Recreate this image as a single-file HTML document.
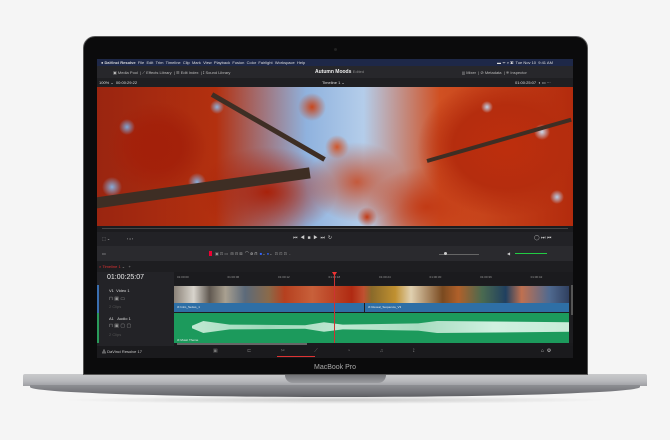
<!DOCTYPE html>
<html><head><meta charset="utf-8"><style>
*{margin:0;padding:0;box-sizing:border-box}
body{width:670px;height:440px;background:#f5f5f5;position:relative;overflow:hidden;font-family:"Liberation Sans",sans-serif}
.a{position:absolute}
.t{position:absolute;font-size:4px;color:#bbb;white-space:nowrap}
</style></head><body>
<div class="a" style="left:60px;top:396px;width:550px;height:8px;border-radius:50%;background:radial-gradient(ellipse at center,rgba(0,0,0,.18),rgba(0,0,0,0) 70%)"></div>
<div class="a" style="left:23px;top:374px;width:624px;height:12px;background:linear-gradient(#c9cacc,#b7b8bb 60%,#9fa0a4);border-radius:2px 2px 0 0"></div>
<div class="a" style="left:30px;top:385px;width:610px;height:12px;background:linear-gradient(#8e8f93,#6f7075 70%,#5c5d61);border-radius:0 0 60% 60%/0 0 100% 100%"></div>
<div class="a" style="left:285px;top:374px;width:101px;height:9px;background:linear-gradient(#6e6f73,#9a9b9f);border-radius:0 0 8px 8px"></div>
<div class="a" style="left:83px;top:36px;width:505px;height:339px;background:#0b0b0c;border-radius:12px 12px 0 0;border:1px solid #555"></div>
<div class="a" style="left:334px;top:48px;width:3px;height:3px;border-radius:50%;background:#222"></div>
<div class="t" style="left:310px;top:364px;font-size:7px;color:#aaa;width:50px;text-align:center">MacBook Pro</div>
<div class="a" style="left:97px;top:59px;width:476px;height:299px;background:#1d1d20;overflow:hidden">
 <div class="a" style="left:0;top:0;width:476px;height:7px;background:#1e2848"></div>
 <div class="t" style="left:4px;top:1px;color:#ddd">&#9679; <b>DaVinci Resolve</b> &nbsp;File &nbsp;Edit &nbsp;Trim &nbsp;Timeline &nbsp;Clip &nbsp;Mark &nbsp;View &nbsp;Playback &nbsp;Fusion &nbsp;Color &nbsp;Fairlight &nbsp;Workspace &nbsp;Help</div>
 <div class="t" style="left:400px;top:1px;color:#ddd">▬ ᯤ ⌕ ▣ &nbsp;Tue Nov 10 &nbsp;9:41 AM</div>
 <div class="a" style="left:0;top:7px;width:476px;height:12px;background:#27272b"></div>
 <div class="t" style="left:16px;top:11px">▣ Media Pool &nbsp;| ⟋ Effects Library &nbsp;| ☰ Edit Index &nbsp;| ⟟ Sound Library</div>
 <div class="t" style="left:218px;top:10px;font-size:5px;color:#eee"><b>Autumn Moods</b> <span style="color:#888;font-size:4px">Edited</span></div>
 <div class="t" style="left:365px;top:11px">||| Mixer &nbsp;| ⊘ Metadata &nbsp;| ⁜ Inspector</div>
 <div class="a" style="left:0;top:19px;width:476px;height:9px;background:#1f1f22"></div>
 <div class="t" style="left:2px;top:21px;color:#ddd">100% ⌄ &nbsp;00:00:29:22</div>
 <div class="t" style="left:225px;top:21px;color:#ddd">Timeline 1 ⌄</div>
 <div class="t" style="left:418px;top:21px;color:#ddd">01:00:25:07 &nbsp;◐ ▭ ···</div>
 <!-- image -->
 <div class="a" style="left:0;top:28px;width:476px;height:139px;background:
  radial-gradient(circle 8px at 30px 40px,#7fa6d6 0,rgba(127,166,214,0) 100%),
  radial-gradient(circle 10px at 15px 100px,#86acd9 0,rgba(127,166,214,0) 100%),
  radial-gradient(circle 7px at 120px 20px,#8fb3dc 0,rgba(127,166,214,0) 100%),
  radial-gradient(circle 9px at 100px 95px,#86acd9 0,rgba(127,166,214,0) 100%),
  radial-gradient(circle 8px at 445px 45px,#c9d8ea 0,rgba(200,215,235,0) 100%),
  radial-gradient(circle 7px at 460px 110px,#b8cde6 0,rgba(200,215,235,0) 100%),
  radial-gradient(circle 6px at 390px 20px,#c0d2e8 0,rgba(200,215,235,0) 100%),
  radial-gradient(circle 12px at 240px 60px,#d0562a 0,rgba(208,86,42,0) 100%),
  radial-gradient(circle 10px at 270px 130px,#c23a15 0,rgba(194,58,21,0) 100%),
  radial-gradient(circle 14px at 215px 20px,#c8461c 0,rgba(200,70,28,0) 100%),
  radial-gradient(ellipse 50px 40px at 260px 95px,rgba(200,70,30,.85) 0,rgba(200,70,30,0) 100%),
  radial-gradient(ellipse 50px 45px at 60px 60px,#a3200a 0,rgba(163,32,10,.9) 50%,rgba(160,40,15,0) 100%),
  radial-gradient(ellipse 90px 70px at 410px 60px,#bd2e0d 0,#b52d0e 60%,rgba(180,45,15,0) 100%),
  radial-gradient(ellipse 70px 45px at 170px 105px,#a8220b 0,rgba(168,34,11,0) 100%),
  radial-gradient(ellipse 60px 40px at 330px 120px,#c23a15 0,rgba(194,58,21,0) 100%),
  linear-gradient(90deg,#9a2510,#b3300f 25%,#8fb2de 44%,#b4cdea 56%,#d05022 72%,#b32b0d)"></div>
 <div class="a" style="left:-5px;top:139px;width:220px;height:11px;background:#3e2e24;transform:rotate(-8deg);transform-origin:left"></div>
 <div class="a" style="left:115px;top:33px;width:130px;height:5px;background:#3e2e24;transform:rotate(30deg);transform-origin:left"></div>
 <div class="a" style="left:330px;top:100px;width:150px;height:4px;background:#3e2e24;transform:rotate(-16deg);transform-origin:left"></div>
 <div class="a" style="left:0;top:167px;width:476px;height:6px;background:#1c1c1f"></div>
 <div class="a" style="left:5px;top:169px;width:466px;height:1px;background:#444"></div>
 <div class="a" style="left:0;top:173px;width:476px;height:14px;background:#222226"></div>
 <div class="t" style="left:5px;top:177px">⬚ ⌄ &nbsp;&nbsp;&nbsp;&nbsp;&nbsp;&nbsp;&nbsp;&nbsp;&nbsp;&nbsp;&nbsp;&nbsp;&nbsp;&nbsp;‹ • ›</div>
 <div class="t" style="left:196px;top:176px;font-size:5px;color:#ccc">⏮ &nbsp;◀ &nbsp;■ &nbsp;▶ &nbsp;⏭ &nbsp;↻</div>
 <div class="t" style="left:437px;top:176px;font-size:5px;color:#ccc">◯ ⏭ ⏮</div>
 <div class="a" style="left:0;top:187px;width:476px;height:15px;background:#2a2a2e"></div>
 <div class="t" style="left:5px;top:192px">▭</div>
 <div class="a" style="left:112px;top:192px;width:3px;height:5px;background:#e03"></div>
 <div class="t" style="left:118px;top:192px;color:#999">▣ ⊡ ▭ &nbsp;⊞ ⊟ ⊠ &nbsp;<span style="color:#ddd">⌒ ⊘ ⊓</span> &nbsp;<span style="color:#36f">■</span>⌄ <span style="color:#36f">●</span>⌄ &nbsp;⊡ ⊡ ⊡ &nbsp;-</div>
 <div class="a" style="left:342px;top:195px;width:40px;height:1px;background:#666"></div>
 <div class="a" style="left:347px;top:193px;width:3px;height:3px;border-radius:50%;background:#ccc"></div>
 <div class="a" style="left:418px;top:194px;width:32px;height:1px;background:#2c4"></div>
 <div class="t" style="left:410px;top:192px;color:#ccc">◀︎</div>
 <div class="a" style="left:0;top:202px;width:476px;height:11px;background:#1e1e21"></div>
 <div class="t" style="left:2px;top:205px;color:#d33">× Timeline 1 <span style="color:#999">⌄ &nbsp;&nbsp;+</span></div>
 <div class="a" style="left:0;top:213px;width:77px;height:86px;background:#232327"></div>
 <div class="t" style="left:10px;top:215px;font-size:7px;color:#eee">01:00:25:07</div>
 <div class="a" style="left:77px;top:213px;width:399px;height:13px;background:#1b1b1e"></div>
 <div class="t" style="left:80px;top:216px;font-size:3px;color:#999;word-spacing:38px">01:00:00 01:00:06 01:00:12 01:00:18 01:00:24 01:00:30 01:00:36 01:00:42</div>
 <div class="a" style="left:0;top:226px;width:2px;height:28px;background:#3a6fb0"></div>
 <div class="t" style="left:12px;top:229px;color:#ddd">V1 &nbsp;Video 1</div>
 <div class="t" style="left:12px;top:237px;font-size:5px;color:#999">⊓ ▣ ▭</div>
 <div class="t" style="left:12px;top:245px;color:#555">2 Clips</div>
 <div class="a" style="left:0;top:254px;width:2px;height:30px;background:#2a9a5a"></div>
 <div class="t" style="left:12px;top:257px;color:#ddd">A1 &nbsp;&nbsp;Audio 1</div>
 <div class="t" style="left:12px;top:264px;font-size:5px;color:#999">⊓ ▣ ▢ ▢</div>
 <div class="t" style="left:12px;top:273px;color:#555">2 Clips</div>
 <div class="a" style="left:77px;top:227px;width:395px;height:17px;background:linear-gradient(90deg,#8a8278 0,#d8d4cc 5%,#605850 9%,#a9a090 13%,#5c6a7a 18%,#8a6a4a 24%,#b5401f 28%,#c8603a 35%,#b02a12 45%,#c05030 48%,#8a6a2a 50%,#c09030 56%,#e0d0b0 60%,#7a4a20 68%,#b0602a 72%,#4a6a50 78%,#204060 84%,#c07050 88%,#506a90 95%,#304060)"></div>
 <div class="a" style="left:77px;top:244px;width:190px;height:9px;background:#2e6fa6"></div>
 <div class="a" style="left:268px;top:244px;width:204px;height:9px;background:#2e6fa6"></div>
 <div class="t" style="left:80px;top:246px;color:#eee;font-size:3px">⊘ Intro_Series_1</div>
 <div class="t" style="left:271px;top:246px;color:#eee;font-size:3px">⊘ Reveal_Sequence_V3</div>
 <div class="a" style="left:77px;top:254px;width:395px;height:30px;background:#1c9a5c"></div>
 <div class="a" style="left:95px;top:262px;width:377px;height:12px;background:linear-gradient(90deg,#bfe8d2,#9ed8ba 20%,#bfe8d2 40%,#a8dcc0 60%,#d0f0e0 80%,#c8ecd8);clip-path:polygon(0 40%,3% 0,10% 30%,30% 35%,35% 10%,40% 30%,60% 20%,65% 0,100% 10%,100% 90%,65% 100%,60% 80%,40% 70%,35% 90%,30% 65%,10% 70%,3% 100%,0 60%)"></div>
 <div class="t" style="left:80px;top:279px;color:#eee;font-size:3px">⊘ Music Theme</div>
 <div class="a" style="left:474px;top:226px;width:2px;height:30px;background:#555"></div>
 <div class="a" style="left:237px;top:214px;width:1px;height:72px;background:#c33"></div>
 <div class="a" style="left:235px;top:213px;width:5px;height:4px;background:#e33;clip-path:polygon(0 0,100% 0,50% 100%)"></div>
 <div class="a" style="left:77px;top:284px;width:399px;height:3px;background:#1b1b1e"></div>
 <div class="a" style="left:80px;top:284px;width:130px;height:2px;background:#666"></div>
 <div class="a" style="left:0;top:287px;width:476px;height:12px;background:#1a1a1d"></div>
 <div class="t" style="left:5px;top:290px;color:#ccc">⁂ DaVinci Resolve 17</div>
 <div class="t" style="left:116px;top:289px;font-size:5px;color:#777;word-spacing:28px">▣ ⊏ ✂ ⟋ ◔ ♫ ⟟</div>
 <div class="a" style="left:180px;top:297px;width:38px;height:1px;background:#d33"></div>
 <div class="t" style="left:444px;top:289px;font-size:5px;color:#ccc">⌂ &nbsp;⚙</div>
</div>
</body></html>
